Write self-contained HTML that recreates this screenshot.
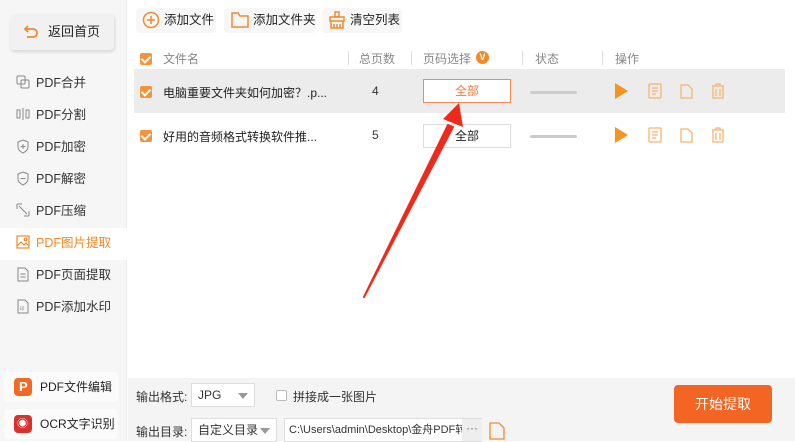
<!DOCTYPE html>
<html><head><meta charset="utf-8"><style>
*{margin:0;padding:0;box-sizing:border-box}
body{width:795px;height:441px;overflow:hidden;background:#fff;font-family:"Liberation Sans","Noto Sans CJK SC",sans-serif;font-size:12px;color:#333;position:relative}
.side{position:absolute;left:0;top:0;width:127px;height:441px;background:#f6f6f6;border-right:1px solid #ececec}
.home{position:absolute;left:10px;top:14px;width:104px;height:36px;background:#f1f1f1;border-radius:4px;box-shadow:1px 2px 3px rgba(0,0,0,.12);font-size:13px;color:#222;line-height:36px;padding-left:38px}
.home svg{position:absolute;left:13px;top:10px}
.nav{position:absolute;left:16px;font-size:12.5px;color:#333;line-height:16px;padding-left:20px;white-space:nowrap}
.nav svg{position:absolute;left:0;top:0}
.nav.act{color:#f28a2a}
.actbg{position:absolute;left:0;top:228px;width:127px;height:32px;background:#fff}
.bot{position:absolute;left:4px;width:114px;height:30px;background:#fbfbfb;border-radius:4px;font-size:12px;line-height:30px;padding-left:36px;color:#222;white-space:nowrap}
.bot i{position:absolute;left:10px;top:6px;width:18px;height:18px;border-radius:4px}
.tb{position:absolute;top:8px;height:25px;background:#f7f7f7;border-radius:4px;font-size:12.5px;line-height:25px;color:#222;white-space:nowrap}
.tb svg{position:absolute;left:6px;top:3px}
.hdr{position:absolute;top:50px;font-size:12px;color:#888}
.sep{position:absolute;top:51px;width:1px;height:14px;background:#ddd}
.cb{position:absolute;width:12px;height:12px;background:#f5923a;border-radius:2px}
.cb:after{content:"";position:absolute;left:3px;top:1px;width:4px;height:7px;border:solid #fff;border-width:0 2px 2px 0;transform:rotate(45deg)}
.row{position:absolute;left:134px;width:651px;height:44px}
.sel{position:absolute;left:423px;width:88px;height:24px;border:1px solid #ddd;text-align:center;line-height:22px;font-size:12px;background:#fff}
.bar{position:absolute;left:530px;width:47px;height:3px;background:#ccc;border-radius:2px}
.bottom{position:absolute;left:128px;top:378px;width:667px;height:63px;background:#f4f4f4}
.dd{position:absolute;height:24px;border:1px solid #ddd;background:#fff;font-size:12px;line-height:22px;padding-left:6px;white-space:nowrap}
.dd b{position:absolute;right:6px;top:9px;border:5px solid transparent;border-top:6px solid #999;border-bottom:0}
.lbl{position:absolute;left:8px;font-size:12px;white-space:nowrap}
</style></head><body>
<div class="side">
 <div class="home"><svg width="16" height="16" viewBox="0 0 16 16" fill="none" stroke="#f28a2a" stroke-width="1.8"><path d="M5 2L2 5l3 3"/><path d="M2 5h8a4 4 0 010 8H4"/></svg>返回首页</div>
 <div class="actbg"></div>
 <div class="nav" style="top:75px"><svg width="14" height="14" fill="none" stroke="#888" stroke-width="1"><rect x="1" y="1" width="8" height="8" rx="1"/><rect x="5" y="5" width="8" height="8" rx="1"/></svg>PDF合并</div>
 <div class="nav" style="top:107px"><svg width="14" height="14" fill="none" stroke="#888" stroke-width="1"><rect x="1" y="3" width="3" height="8"/><rect x="10" y="3" width="3" height="8"/><path d="M7 1v12"/></svg>PDF分割</div>
 <div class="nav" style="top:139px"><svg width="14" height="15" fill="none" stroke="#888" stroke-width="1"><path d="M7 1l5 2v5c0 3-3 5-5 6-2-1-5-3-5-6V3z"/><path d="M7 5v5M4.5 7.5h5"/></svg>PDF加密</div>
 <div class="nav" style="top:171px"><svg width="14" height="15" fill="none" stroke="#888" stroke-width="1"><path d="M7 1l5 2v5c0 3-3 5-5 6-2-1-5-3-5-6V3z"/><path d="M4.5 7.5h5"/></svg>PDF解密</div>
 <div class="nav" style="top:203px"><svg width="14" height="14" fill="none" stroke="#888" stroke-width="1"><path d="M1 1h5M1 1v5M13 13H8M13 13V8M3 3l8 8"/></svg>PDF压缩</div>
 <div class="nav act" style="top:235px"><svg width="14" height="14" fill="none" stroke="#f28a2a" stroke-width="1.2"><rect x="1" y="1" width="12" height="12"/><path d="M1 11l4-4 3 3 2-2 3 3"/><circle cx="9.5" cy="4.5" r="1.3"/></svg>PDF图片提取</div>
 <div class="nav" style="top:267px"><svg width="14" height="15" fill="none" stroke="#888" stroke-width="1"><path d="M2 1h7l3 3v10H2z"/><path d="M4.5 7h5M4.5 10h5"/></svg>PDF页面提取</div>
 <div class="nav" style="top:299px"><svg width="14" height="15" fill="none" stroke="#888" stroke-width="1"><path d="M2 1h7l3 3v10H2z"/><text x="3.5" y="11.5" font-size="5" fill="#888" stroke="none">印</text></svg>PDF添加水印</div>
 <div class="bot" style="top:372px"><i style="background:#f06a25"></i><span style="position:absolute;left:15px;top:6px;color:#fff;font-weight:bold;font-size:13px;line-height:18px">P</span>PDF文件编辑</div>
 <div class="bot" style="top:409px"><i style="background:#d9322b"></i><span style="position:absolute;left:13px;top:6px;color:#fff;font-size:11px;line-height:18px">◉</span>OCR文字识别</div>
</div>

<div class="tb" style="left:136px;width:80px;padding-left:28px"><svg width="18" height="18" fill="none" stroke="#f28a2a" stroke-width="1.5"><circle cx="9" cy="9" r="7.5"/><path d="M9 5v8M5 9h8"/></svg>添加文件</div>
<div class="tb" style="left:224px;width:92px;padding-left:29px"><svg width="20" height="18" fill="none" stroke="#f28a2a" stroke-width="1.5"><path d="M2 2h6l2 3h8v11H2z"/></svg>添加文件夹</div>
<div class="tb" style="left:322px;width:80px;padding-left:28px"><svg width="18" height="18" fill="none" stroke="#f28a2a" stroke-width="1.5"><rect x="7" y="1" width="4" height="5"/><rect x="2" y="6" width="14" height="4"/><path d="M3 10v7h12v-7M6 13v4M9 13v4M12 13v4"/></svg>清空列表</div>

<div class="cb" style="left:140px;top:53px"></div>
<div class="hdr" style="left:163px">文件名</div>
<div class="sep" style="left:348px"></div>
<div class="hdr" style="left:359px">总页数</div>
<div class="sep" style="left:411px"></div>
<div class="hdr" style="left:423px">页码选择</div>
<div style="position:absolute;left:476px;top:51px;width:13px;height:13px;border-radius:50%;background:#f28a2a;color:#fff;font-size:9px;text-align:center;line-height:13px;font-weight:bold">V</div>
<div class="sep" style="left:522px"></div>
<div class="hdr" style="left:535px">状态</div>
<div class="sep" style="left:602px"></div>
<div class="hdr" style="left:615px">操作</div>

<div class="row" style="top:69px;background:#ececec"></div>
<div class="cb" style="left:140px;top:86px"></div>
<div style="position:absolute;left:163px;top:84px;font-size:12px;color:#222">电脑重要文件夹如何加密？.p...</div>
<div style="position:absolute;left:372px;top:84px;font-size:12px">4</div>
<div class="sel" style="top:79px;border-color:#f28a5a;color:#f27a3a">全部</div>
<div class="bar" style="top:91px"></div>

<div class="cb" style="left:140px;top:130px"></div>
<div style="position:absolute;left:163px;top:128px;font-size:12px;color:#222">好用的音频格式转换软件推...</div>
<div style="position:absolute;left:372px;top:128px;font-size:12px">5</div>
<div class="sel" style="top:124px;color:#222">全部</div>
<div class="bar" style="top:135px"></div>

<svg style="position:absolute;left:600px;top:80px" width="140" height="70">
 <g fill="#f7941d"><path d="M15 3l13 8-13 8z"/><path d="M15 47l13 8-13 8z"/></g>
 <g fill="none" stroke="#f8b46a" stroke-width="1.3">
  <rect x="49" y="4" width="12" height="14" rx="1"/><path d="M52 8h6M52 11h6M52 14h4"/>
  <rect x="49" y="48" width="12" height="14" rx="1"/><path d="M52 52h6M52 55h6M52 58h4"/>
  <path d="M81 5h7l4 4v9H81z"/><path d="M81 49h7l4 4v9H81z"/>
  <path d="M112 6h12M116 6V4h4v2M113 6v12h10V6M116 9v7M120 9v7"/>
  <path d="M112 50h12M116 50v-2h4v2M113 50v12h10V50M116 53v7M120 53v7"/>
 </g>
</svg>

<svg style="position:absolute;left:0;top:0" width="795" height="441"><path d="M364 297L448 125 453 127z" fill="#f02a1a" stroke="#f02a1a" stroke-width="2" stroke-linejoin="round"/><path d="M459 103L443 119 463 127z" fill="#f02a1a"/></svg>

<div class="bottom">
 <div class="lbl" style="top:10px">输出格式:</div>
 <div class="dd" style="left:63px;top:5px;width:64px">JPG<b></b></div>
 <div style="position:absolute;left:148px;top:12px;width:11px;height:11px;border:1px solid #bbb;background:#fff;border-radius:2px"></div>
 <div style="position:absolute;left:165px;top:10px;font-size:12px;white-space:nowrap">拼接成一张图片</div>
 <div class="lbl" style="top:45px">输出目录:</div>
 <div class="dd" style="left:63px;top:40px;width:86px">自定义目录<b></b></div>
 <div class="dd" style="left:156px;top:40px;width:198px;font-size:11px;padding-left:4px;overflow:hidden">C:\Users\admin\Desktop\金舟PDF转换</div>
 <div style="position:absolute;left:334px;top:41px;width:20px;height:22px;background:#eee;text-align:center;line-height:18px;color:#666">···</div>
 <svg style="position:absolute;left:361px;top:44px" width="16" height="18" fill="none" stroke="#f28a2a" stroke-width="1.3"><path d="M1 1h9l5 5v11H1z"/></svg>
 <div style="position:absolute;left:546px;top:7px;width:98px;height:38px;background:#f26522;border-radius:4px;color:#fff;font-size:14px;text-align:center;line-height:38px">开始提取</div>
</div>
</body></html>
